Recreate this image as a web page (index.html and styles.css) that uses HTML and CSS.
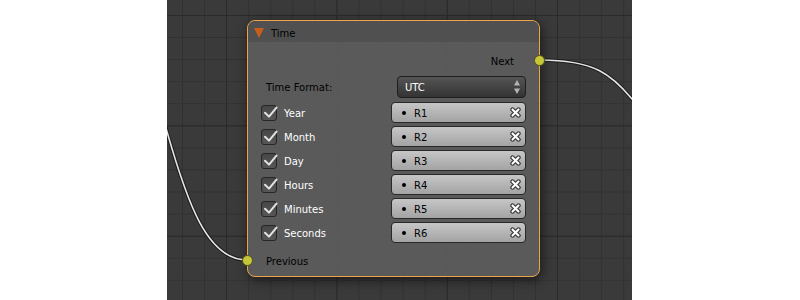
FILE: index.html
```html
<!DOCTYPE html>
<html>
<head>
<meta charset="utf-8">
<link rel="stylesheet" href="styles.css">
</head>
<body>
<div class="page">
  <div class="side"></div>
  <div class="canvas">
    <svg class="wires" width="465" height="300" viewBox="0 0 465 300">
      <g transform="translate(-167 0)">
        <path class="wire-outline" d="M162 114 L167 131.7 C187 201.7 207 260 247 260"/>
        <path class="wire-core" d="M162 114 L167 131.7 C187 201.7 207 260 247 260"/>
        <path class="wire-outline" d="M540 60 C595 60 612 75 632 99 L640 109"/>
        <path class="wire-core" d="M540 60 C595 60 612 75 632 99 L640 109"/>
      </g>
    </svg>
    <div class="node">
      <div class="node-header"><span class="collapse"></span><span class="title">Time</span></div>
      <div class="node-body">
        <div class="row row-out"><span class="label dark">Next</span><span class="socket socket-out"></span></div>
        <div class="row row-prop"><span class="label dark">Time Format:</span>
          <div class="select"><span class="stext">UTC</span>
            <svg class="arrows" width="8" height="16" viewBox="0 0 8 16"><path d="M4 1 L7 6.5 L1 6.5 Z"/><path d="M1 9.5 L7 9.5 L4 15 Z"/></svg>
          </div>
        </div>
        <div class="row row-check"><span class="cb"><svg width="18" height="16" viewBox="0 0 18 16"><path d="M4 7.8 L8 11.6 L15.5 2.6"/></svg></span><span class="label light">Year</span>
          <div class="field"><span class="dot"></span><span class="ftext">R1</span><svg class="x" width="11" height="11" viewBox="0 0 11 11"><path class="xo" d="M2.5 2.5 L8.5 8.5 M8.5 2.5 L2.5 8.5"/><path class="xi" d="M2.5 2.5 L8.5 8.5 M8.5 2.5 L2.5 8.5"/></svg></div></div>
        <div class="row row-check"><span class="cb"><svg width="18" height="16" viewBox="0 0 18 16"><path d="M4 7.8 L8 11.6 L15.5 2.6"/></svg></span><span class="label light">Month</span>
          <div class="field"><span class="dot"></span><span class="ftext">R2</span><svg class="x" width="11" height="11" viewBox="0 0 11 11"><path class="xo" d="M2.5 2.5 L8.5 8.5 M8.5 2.5 L2.5 8.5"/><path class="xi" d="M2.5 2.5 L8.5 8.5 M8.5 2.5 L2.5 8.5"/></svg></div></div>
        <div class="row row-check"><span class="cb"><svg width="18" height="16" viewBox="0 0 18 16"><path d="M4 7.8 L8 11.6 L15.5 2.6"/></svg></span><span class="label light">Day</span>
          <div class="field"><span class="dot"></span><span class="ftext">R3</span><svg class="x" width="11" height="11" viewBox="0 0 11 11"><path class="xo" d="M2.5 2.5 L8.5 8.5 M8.5 2.5 L2.5 8.5"/><path class="xi" d="M2.5 2.5 L8.5 8.5 M8.5 2.5 L2.5 8.5"/></svg></div></div>
        <div class="row row-check"><span class="cb"><svg width="18" height="16" viewBox="0 0 18 16"><path d="M4 7.8 L8 11.6 L15.5 2.6"/></svg></span><span class="label light">Hours</span>
          <div class="field"><span class="dot"></span><span class="ftext">R4</span><svg class="x" width="11" height="11" viewBox="0 0 11 11"><path class="xo" d="M2.5 2.5 L8.5 8.5 M8.5 2.5 L2.5 8.5"/><path class="xi" d="M2.5 2.5 L8.5 8.5 M8.5 2.5 L2.5 8.5"/></svg></div></div>
        <div class="row row-check"><span class="cb"><svg width="18" height="16" viewBox="0 0 18 16"><path d="M4 7.8 L8 11.6 L15.5 2.6"/></svg></span><span class="label light">Minutes</span>
          <div class="field"><span class="dot"></span><span class="ftext">R5</span><svg class="x" width="11" height="11" viewBox="0 0 11 11"><path class="xo" d="M2.5 2.5 L8.5 8.5 M8.5 2.5 L2.5 8.5"/><path class="xi" d="M2.5 2.5 L8.5 8.5 M8.5 2.5 L2.5 8.5"/></svg></div></div>
        <div class="row row-check"><span class="cb"><svg width="18" height="16" viewBox="0 0 18 16"><path d="M4 7.8 L8 11.6 L15.5 2.6"/></svg></span><span class="label light">Seconds</span>
          <div class="field"><span class="dot"></span><span class="ftext">R6</span><svg class="x" width="11" height="11" viewBox="0 0 11 11"><path class="xo" d="M2.5 2.5 L8.5 8.5 M8.5 2.5 L2.5 8.5"/><path class="xi" d="M2.5 2.5 L8.5 8.5 M8.5 2.5 L2.5 8.5"/></svg></div></div>
        <div class="row row-in"><span class="socket socket-in"></span><span class="label dark">Previous</span></div>
      </div>
    </div>
  </div>
  <div class="side"></div>
</div>
</body>
</html>
```

FILE: styles.css
```css
html, body {
  margin: 0;
  padding: 0;
  background: #ffffff;
}
body {
  font-family: "DejaVu Sans", "Liberation Sans", sans-serif;
  font-size: 10px;
}
.page {
  display: flex;
  width: 800px;
  height: 300px;
}
.side {
  width: 167px;
  flex: none;
  background: #ffffff;
}
.canvas {
  position: relative;
  width: 465px;
  height: 300px;
  flex: none;
  overflow: hidden;
  background-color: #3a3a3a;
  background-image:
    linear-gradient(to right, #2a2a2a 1px, transparent 1px),
    linear-gradient(to bottom, #2a2a2a 1px, transparent 1px),
    linear-gradient(to right, #313131 1px, transparent 1px),
    linear-gradient(to bottom, #313131 1px, transparent 1px);
  background-size: 110.35px 110.35px, 110.35px 110.35px, 22.07px 22.07px, 22.07px 22.07px;
  background-position: 59px 0, 0 15px, 15px 0, 0 15px;
}
.wires {
  position: absolute;
  left: 0;
  top: 0;
}
.wire-outline {
  fill: none;
  stroke: #1c1c1c;
  stroke-width: 3.6;
}
.wire-core {
  fill: none;
  stroke: #e6e6e6;
  stroke-width: 1.6;
}
.node {
  position: absolute;
  left: 80px;
  top: 20px;
  width: 293px;
  height: 257px;
  box-sizing: border-box;
  border: 1px solid #eda347;
  border-radius: 8px;
  background: rgba(93, 93, 93, 0.93);
  box-shadow: 2px 3px 12px rgba(0, 0, 0, 0.55);
  display: flex;
  flex-direction: column;
}
.node-header {
  height: 21px;
  flex: none;
  display: flex;
  align-items: center;
  padding-left: 6px;
  background: rgba(80, 80, 80, 0.95);
  border-radius: 7px 7px 0 0;
  color: #000;
}
.collapse {
  width: 0;
  height: 0;
  border-left: 5px solid transparent;
  border-right: 5px solid transparent;
  border-top: 10px solid #c95d1e;
  margin-top: 3px;
}
.title {
  margin-left: 7px;
  padding-top: 3px;
}
.node-body {
  position: relative;
  display: flex;
  flex-direction: column;
  padding-top: 8px;
}
.row {
  position: relative;
  display: flex;
  align-items: center;
}
.label, .ftext, .stext {
  padding-top: 1px;
}
.label.dark { color: #000; }
.label.light { color: #fff; }
.row-out {
  height: 21px;
  justify-content: flex-end;
  padding-right: 25px;
}
.socket {
  position: absolute;
  top: calc(50% - 6px);
  width: 11px;
  height: 11px;
  box-sizing: border-box;
  border-radius: 50%;
  background: #c6c63a;
  border: 1px solid rgba(0, 0, 0, 0.55);
}
.socket-out { right: -6px; }
.socket-in { left: -6px; }
.row-prop {
  height: 22px;
  margin-top: 5px;
  padding-left: 18px;
  padding-right: 13px;
}
.select {
  margin-left: auto;
  width: 129px;
  height: 22px;
  box-sizing: border-box;
  border: 1px solid #1f1f1f;
  border-radius: 4px;
  background: linear-gradient(to bottom, #555555, #333333);
  color: #fff;
  display: flex;
  align-items: center;
  padding-left: 7px;
  padding-right: 4px;
}
.stext { flex: 1; }
.arrows path { fill: #b4b4b4; }
.row-check {
  height: 21px;
  margin-top: 3px;
  padding-left: 13px;
  padding-right: 13px;
}
.row-prop + .row-check { margin-top: 4px; }
.cb {
  width: 16px;
  height: 16px;
  box-sizing: border-box;
  border: 1px solid #262626;
  border-radius: 3px;
  background: linear-gradient(to bottom, #474747, #565656);
  position: relative;
  flex: none;
  margin-top: 1px;
}
.cb svg {
  position: absolute;
  left: -1px;
  top: -1px;
  overflow: visible;
}
.cb path {
  fill: none;
  stroke: #e4e4e4;
  stroke-width: 2;
  stroke-linecap: round;
  stroke-linejoin: round;
}
.row-check .label {
  margin-left: 7px;
}
.field {
  margin-left: auto;
  width: 135px;
  height: 21px;
  box-sizing: border-box;
  border: 1px solid #282828;
  border-radius: 4px;
  background: linear-gradient(to bottom, #c6c6c6, #a3a3a3);
  color: #000;
  display: flex;
  align-items: center;
  padding-left: 10px;
  padding-right: 4px;
}
.dot {
  width: 4px;
  height: 4px;
  border-radius: 50%;
  background: #000;
  flex: none;
}
.ftext {
  margin-left: 8px;
  flex: 1;
}
.x .xo {
  fill: none;
  stroke: #333333;
  stroke-width: 4.4;
  stroke-linecap: round;
}
.x .xi {
  fill: none;
  stroke: #ffffff;
  stroke-width: 2.2;
  stroke-linecap: round;
}
.row-in {
  height: 20px;
  margin-top: 8px;
  padding-left: 18px;
}
```
